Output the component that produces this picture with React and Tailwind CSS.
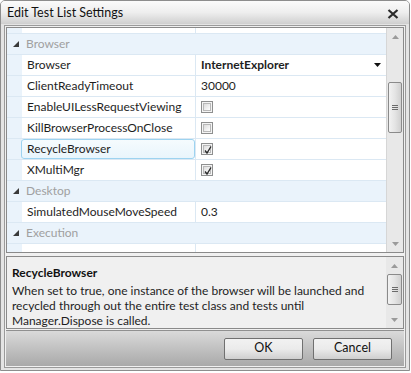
import React from "react";

const F = { fontFamily: 'Lato, "Open Sans", sans-serif' };

function Tri() {
  return (
    <svg width="6" height="6" viewBox="0 0 6 6" className="shrink-0">
      <path d="M6 0 L6 6 L0 6 Z" fill="#3a3a3a" />
    </svg>
  );
}

function Check({ checked }) {
  return (
    <div className="w-[12px] h-[12px] border border-[#8e8f8f] bg-[#f4f4f4] p-[1px]">
      <div className="w-full h-full border border-[#b8b8b8] bg-gradient-to-br from-[#dcdcdc] to-white relative">
        {checked && (
          <svg width="8" height="8" viewBox="0 0 8 8" className="absolute left-0 top-0">
            <path d="M1 4.5 L3 7 L7 0.5" stroke="#2a2a2a" strokeWidth="1.4" fill="none" />
          </svg>
        )}
      </div>
    </div>
  );
}

function Category({ name }) {
  return (
    <div className="h-[21px] flex items-center bg-[#eaf3fb] border-b border-[#dbe8f3]">
      <div className="w-[15px] flex justify-center pl-[2px]">
        <Tri />
      </div>
      <span className="ml-[4px] text-[12px] text-[#a0a0a0]">{name}</span>
    </div>
  );
}

function Row({ label, children, selected }) {
  return (
    <div className="h-[21px] flex border-b border-[#dbe8f3] bg-white">
      <div className="w-[15px] bg-[#eaf3fb]" />
      <div className="w-[174px] border-r border-[#dbe8f3] flex items-stretch">
        {selected ? (
          <div className="flex-1 -ml-[1px] rounded-[3px] border border-[#9dd3f0] bg-gradient-to-b from-[#f5fbfe] to-[#e9f5fc] flex items-center pl-[5px] text-[12px] text-[#1e1e1e]">
            {label}
          </div>
        ) : (
          <div className="flex items-center pl-[5px] text-[12px] text-[#1e1e1e]">{label}</div>
        )}
      </div>
      <div className="flex-1 flex items-center pl-[5px] text-[12px] text-[#1e1e1e]">{children}</div>
    </div>
  );
}

function UpArrow() {
  return (
    <svg width="7" height="4" viewBox="0 0 7 4">
      <path d="M3.5 0 L7 4 L0 4 Z" fill="#9a9a9a" />
    </svg>
  );
}
function DownArrow() {
  return (
    <svg width="7" height="4" viewBox="0 0 7 4">
      <path d="M0 0 L7 0 L3.5 4 Z" fill="#9a9a9a" />
    </svg>
  );
}

function Thumb({ h }) {
  return (
    <div
      className={`mx-[1px] rounded-[2px] border border-[#8a8a8a] bg-gradient-to-r from-[#f2f2f2] via-[#e4e4e4] to-[#d0d0d0] flex flex-col items-center justify-center gap-[1px] ${h}`}
    >
      <div className="w-[6px] h-[1px] bg-[#6a6a6a]" />
      <div className="w-[6px] h-[1px] bg-[#6a6a6a]" />
      <div className="w-[6px] h-[1px] bg-[#6a6a6a]" />
    </div>
  );
}

export default function App() {
  return (
    <div className="w-[411px] h-[373px] bg-white" style={F}>
      <div className="w-[410px] h-[371px] border border-[#8d8d8d] rounded-t-[5px] bg-[#e4e4e4] flex flex-col overflow-hidden">
        {/* Title bar */}
        <div className="h-[23px] shrink-0 bg-gradient-to-b from-[#fbfbfb] via-[#eeeeee] to-[#cfcfcf] flex items-center justify-between pl-[6px] pr-[10px] pt-[2px]">
          <span className="text-[12.5px] text-[#111]">Edit Test List Settings</span>
          <svg width="12" height="10" viewBox="0 0 12 10">
            <path d="M1.5 1 L10.5 9 M10.5 1 L1.5 9" stroke="#2a2a2a" strokeWidth="2.2" />
          </svg>
        </div>

        {/* Content */}
        <div className="flex-1 flex flex-col px-[3px] pt-[1px] pb-[2px]">
          <div className="border border-[#9a9a9a] p-[1px] bg-[#f0f0f0] flex flex-col flex-1">
            {/* Property grid */}
            <div className="h-[226px] border border-[#8a8a8a] flex bg-white">
              <div className="flex-1 overflow-hidden">
                <div className="-mt-[15px]">
                  <Row label="">{""}</Row>
                  <Category name="Browser" />
                  <Row label="Browser">
                    <div className="flex-1 flex items-center justify-between pr-[5px]">
                      <span className="font-bold">InternetExplorer</span>
                      <svg width="7" height="4" viewBox="0 0 7 4">
                        <path d="M0 0 L7 0 L3.5 4 Z" fill="#111" />
                      </svg>
                    </div>
                  </Row>
                  <Row label="ClientReadyTimeout">30000</Row>
                  <Row label="EnableUILessRequestViewing">
                    <Check />
                  </Row>
                  <Row label="KillBrowserProcessOnClose">
                    <Check />
                  </Row>
                  <Row label="RecycleBrowser" selected>
                    <Check checked />
                  </Row>
                  <Row label="XMultiMgr">
                    <Check checked />
                  </Row>
                  <Category name="Desktop" />
                  <Row label="SimulatedMouseMoveSpeed">0.3</Row>
                  <Category name="Execution" />
                  <Row label="">{""}</Row>
                </div>
              </div>
              {/* Scrollbar */}
              <div className="w-[17px] bg-[#e8e8e8] border-l border-[#d6d6d6] flex flex-col">
                <div className="h-[17px] flex items-center justify-center">
                  <UpArrow />
                </div>
                <div className="h-[37px]" />
                <Thumb h="h-[51px]" />
                <div className="flex-1" />
                <div className="h-[17px] flex items-center justify-center">
                  <DownArrow />
                </div>
              </div>
            </div>

            {/* Separator */}
            <div className="h-[3px] bg-[#f0f0f0]" />

            {/* Description */}
            <div className="h-[73px] border border-[#8a8a8a] flex bg-[#f0f0f0]">
              <div className="flex-1 overflow-hidden pl-[5px] pt-[7px]">
                <div className="text-[12px] font-bold text-[#111] leading-[18px]">RecycleBrowser</div>
                <div className="text-[12px] text-[#1e1e1e] leading-[15px] mt-[1px]">
                  When set to true, one instance of the browser will be launched and
                  <br />
                  recycled through out the entire test class and tests until
                  <br />
                  Manager.Dispose is called.
                </div>
              </div>
              <div className="w-[17px] bg-[#e8e8e8] flex flex-col">
                <div className="h-[17px] flex items-center justify-center">
                  <UpArrow />
                </div>
                <Thumb h="h-[31px]" />
                <div className="flex-1" />
                <div className="h-[17px] flex items-center justify-center">
                  <DownArrow />
                </div>
              </div>
            </div>

            {/* Buttons */}
            <div className="flex-1 mt-[1px] bg-gradient-to-b from-[#dadada] to-[#a9a9a9] flex items-center justify-end gap-[10px] pr-[12px] border-t border-[#909090]">
              <button className="w-[79px] h-[22px] rounded-[2px] border border-[#707070] bg-gradient-to-b from-[#f2f2f2] via-[#ebebeb] to-[#cfcfcf] text-[12.5px] text-[#111]">
                OK
              </button>
              <button className="w-[79px] h-[22px] rounded-[2px] border border-[#707070] bg-gradient-to-b from-[#f2f2f2] via-[#ebebeb] to-[#cfcfcf] text-[12.5px] text-[#111]">
                Cancel
              </button>
            </div>
          </div>
        </div>
      </div>
    </div>
  );
}
